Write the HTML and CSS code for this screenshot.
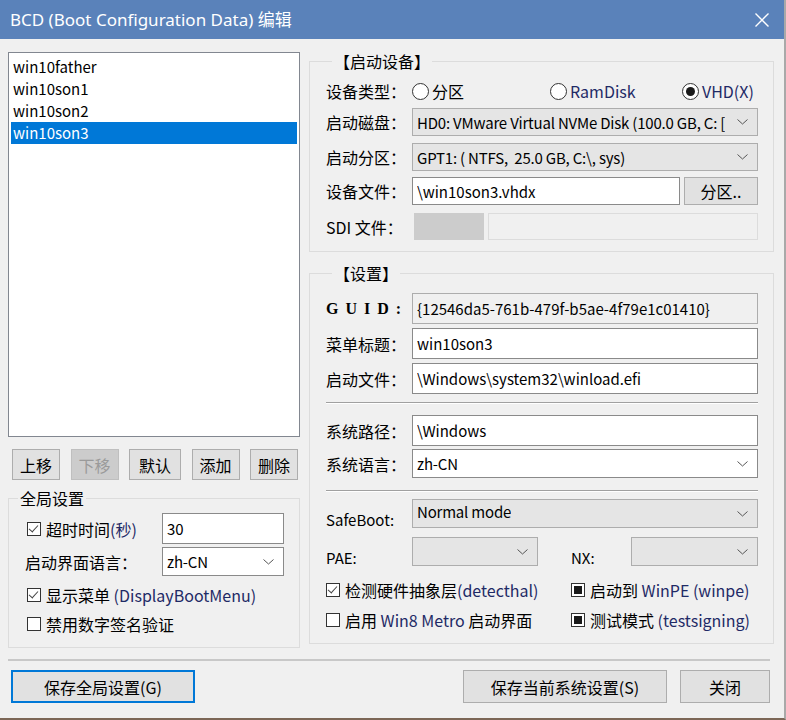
FILE: index.html
```html
<!DOCTYPE html>
<html lang="zh-CN">
<head>
    <meta charset="UTF-8">
    <title>BCD 编辑</title>
    <link rel="stylesheet" href="styles.css">
</head>
<body>
<div class="window">
    <div class="titlebar">
        <span class="title">BCD (Boot Configuration Data) 编辑</span>
        <svg class="close" width="16" height="16" viewBox="0 0 16 16"><path d="M1.5 1.5L14.5 14.5M14.5 1.5L1.5 14.5" stroke="#fff" stroke-width="1.4" fill="none"/></svg>
    </div>

    <div class="main">
        <div class="left">
            <ul class="list">
                <li>win10father</li>
                <li>win10son1</li>
                <li>win10son2</li>
                <li class="selected">win10son3</li>
            </ul>
            <div class="list-buttons">
                <button class="btn">上移</button>
                <button class="btn" disabled>下移</button>
                <button class="btn wide">默认</button>
                <button class="btn">添加</button>
                <button class="btn">删除</button>
            </div>
            <fieldset class="group global">
                <legend>全局设置</legend>
                <div class="grow first">
                    <label class="check"><span class="box checked"></span><span>超时时间<span class="latin">(秒)</span></span></label>
                    <input class="text" type="text" value="30">
                </div>
                <div class="grow combo-row">
                    <span class="glabel">启动界面语言：</span>
                    <div class="combo white"><span>zh-CN</span><svg width="11" height="6" viewBox="0 0 11 6"><path d="M0.5 0.5L5.5 5L10.5 0.5" stroke="#555" fill="none"/></svg></div>
                </div>
                <label class="check crow first-check"><span class="box checked"></span><span>显示菜单 <span class="latin">(DisplayBootMenu)</span></span></label>
                <label class="check crow"><span class="box"></span><span>禁用数字签名验证</span></label>
            </fieldset>
        </div>

        <div class="right">
            <fieldset class="group device">
                <legend>【启动设备】</legend>
                <div class="row radio-row">
                    <span class="label">设备类型：</span>
                    <div class="radios">
                        <label class="radio"><span class="dot"></span>分区</label>
                        <label class="radio"><span class="dot"></span><span class="latin">RamDisk</span></label>
                        <label class="radio"><span class="dot on"></span><span class="latin">VHD(X)</span></label>
                    </div>
                </div>
                <div class="row r1">
                    <span class="label">启动磁盘：</span>
                    <div class="combo"><span>HD0: VMware Virtual NVMe Disk (100.0 GB, C: [</span><svg width="11" height="6" viewBox="0 0 11 6"><path d="M0.5 0.5L5.5 5L10.5 0.5" stroke="#555" fill="none"/></svg></div>
                </div>
                <div class="row r2">
                    <span class="label">启动分区：</span>
                    <div class="combo"><span>GPT1: ( NTFS,&nbsp; 25.0 GB, C:\, sys)</span><svg width="11" height="6" viewBox="0 0 11 6"><path d="M0.5 0.5L5.5 5L10.5 0.5" stroke="#555" fill="none"/></svg></div>
                </div>
                <div class="row r3">
                    <span class="label">设备文件：</span>
                    <input class="text file" type="text" value="\win10son3.vhdx">
                    <button class="btn part">分区..</button>
                </div>
                <div class="row r4">
                    <span class="label">SDI 文件：</span>
                    <span class="sdi-box"></span>
                    <span class="sdi-field"></span>
                </div>
            </fieldset>

            <fieldset class="group settings">
                <legend>【设置】</legend>
                <div class="row tall first">
                    <span class="label guid">GUID:</span>
                    <input class="text readonly" type="text" value="{12546da5-761b-479f-b5ae-4f79e1c01410}" readonly>
                </div>
                <div class="row tall gap4">
                    <span class="label">菜单标题：</span>
                    <input class="text" type="text" value="win10son3">
                </div>
                <div class="row tall gap4">
                    <span class="label">启动文件：</span>
                    <input class="text" type="text" value="\Windows\system32\winload.efi">
                </div>
                <div class="sep s1"></div>
                <div class="row tall">
                    <span class="label">系统路径：</span>
                    <input class="text" type="text" value="\Windows">
                </div>
                <div class="row gap3">
                    <span class="label">系统语言：</span>
                    <div class="combo white"><span>zh-CN</span><svg width="11" height="6" viewBox="0 0 11 6"><path d="M0.5 0.5L5.5 5L10.5 0.5" stroke="#555" fill="none"/></svg></div>
                </div>
                <div class="sep s2"></div>
                <div class="row low safeboot">
                    <span class="label small">SafeBoot:</span>
                    <div class="combo top"><span>Normal mode</span><svg width="11" height="6" viewBox="0 0 11 6"><path d="M0.5 0.5L5.5 5L10.5 0.5" stroke="#555" fill="none"/></svg></div>
                </div>
                <div class="row low pae">
                    <span class="label small">PAE:</span>
                    <div class="combo short"><span></span><svg width="11" height="6" viewBox="0 0 11 6"><path d="M0.5 0.5L5.5 5L10.5 0.5" stroke="#555" fill="none"/></svg></div>
                    <span class="label small nx">NX:</span>
                    <div class="combo"><span></span><svg width="11" height="6" viewBox="0 0 11 6"><path d="M0.5 0.5L5.5 5L10.5 0.5" stroke="#555" fill="none"/></svg></div>
                </div>
                <div class="checks">
                    <label class="check"><span class="box checked"></span><span>检测硬件抽象层<span class="latin">(detecthal)</span></span></label>
                    <label class="check"><span class="box mixed"></span><span>启动到 <span class="latin">WinPE (winpe)</span></span></label>
                    <label class="check"><span class="box"></span><span>启用 <span class="latin">Win8 Metro</span> 启动界面</span></label>
                    <label class="check"><span class="box mixed"></span><span>测试模式 <span class="latin">(testsigning)</span></span></label>
                </div>
            </fieldset>
        </div>
    </div>

    <div class="footer">
        <button class="btn big default">保存全局设置(G)</button>
        <button class="btn big save">保存当前系统设置(S)</button>
        <button class="btn big closebtn">关闭</button>
    </div>
</div>
</body>
</html>
```

FILE: styles.css
```css
* {
    box-sizing: border-box;
}
body {
    margin: 0;
    background: #f0f0f0;
    font-family: "Noto Sans CJK SC", sans-serif;
    font-size: 16px;
    color: #000;
}
.window {
    width: 786px;
    height: 720px;
    border-right: 2px solid #a9a9a9;
    border-bottom: 2px solid #7c6656;
    overflow: hidden;
}
.titlebar {
    height: 39px;
    background: #5a82ba;
    display: flex;
    align-items: center;
    justify-content: space-between;
    padding: 0 14px 0 10px;
}
.title {
    color: #fff;
    font-family: "Noto Sans", "Noto Sans CJK SC", sans-serif;
    font-size: 17px;
    line-height: 20px;
}
.main {
    display: flex;
    padding: 12px 0 0 8px;
    gap: 9px;
}
.left {
    width: 292px;
}
.right {
    width: 465px;
}

/* list box */
.list {
    list-style: none;
    margin: 1px 0 0;
    padding: 3px 2px;
    height: 385px;
    background: #fff;
    border: 1px solid #828790;
}
.list li {
    height: 22px;
    line-height: 22px;
    padding-left: 2px;
    font-size: 15px;
}
.list li.selected {
    background: #0078d7;
    color: #fff;
}
.list-buttons {
    display: flex;
    justify-content: space-between;
    padding: 0 2px 0 4px;
    margin-top: 12px;
}

/* buttons */
.btn {
    font-family: inherit;
    font-size: 16px;
    height: 31px;
    width: 48px;
    padding: 0;
    background: #e1e1e1;
    border: 1px solid #adadad;
    color: #000;
}
.btn.wide {
    width: 52px;
}
.btn:disabled {
    background: #cccccc;
    border-color: #bfbfbf;
    color: #9a9a9a;
}

/* group boxes */
.group {
    margin: 0;
    padding: 0 15px 0 16px;
    border: 1px solid #dcdcdc;
    min-width: 0;
}
.group legend {
    padding: 0 2px;
    margin-left: 6px;
    line-height: 20px;
    height: 20px;
}
.global {
    margin-top: 8px;
    padding: 0 15px 8px 16px;
    height: 160px;
}
.global legend {
    margin-left: -7px;
}
.grow {
    display: flex;
    align-items: center;
    justify-content: space-between;
}
.grow.first {
    margin-top: 5px;
    padding-left: 2px;
}
.grow .text {
    flex: none;
    width: 122px;
    height: 31px;
}
.combo-row {
    margin-top: 3px;
    height: 29px;
}
.combo-row .combo {
    width: 122px;
    flex: none;
}
.glabel {
    line-height: 20px;
}
.crow {
    height: 26px;
    padding-left: 2px;
}
.first-check {
    margin-top: 6px;
}
.crow + .crow {
    margin-top: 3px;
}

/* check boxes and radios */
.check {
    display: flex;
    align-items: center;
    line-height: 20px;
    white-space: nowrap;
}
.box {
    width: 14px;
    height: 14px;
    border: 1px solid #333;
    background: #fff;
    margin-right: 5px;
    flex: none;
    position: relative;
}
.box.checked::after {
    content: "";
    position: absolute;
    left: 3px;
    top: 0px;
    width: 4px;
    height: 8px;
    border-right: 1.5px solid #444;
    border-bottom: 1.5px solid #444;
    transform: rotate(42deg);
}
.box.mixed::after {
    content: "";
    position: absolute;
    left: 2px;
    top: 2px;
    width: 8px;
    height: 8px;
    background: #1a1a1a;
}
.latin {
    color: #1f2a66;
}
.radios {
    display: grid;
    grid-template-columns: 138px 132px auto;
}
.radio {
    display: flex;
    align-items: center;
    line-height: 20px;
}
.dot {
    width: 17px;
    height: 17px;
    border: 1px solid #333;
    border-radius: 50%;
    background: #fff;
    margin-right: 3px;
    position: relative;
}
.dot.on::after {
    content: "";
    position: absolute;
    left: 3px;
    top: 3px;
    width: 9px;
    height: 9px;
    border-radius: 50%;
    background: #1a1a1a;
}

/* rows on the right */
.row {
    display: flex;
    align-items: center;
    height: 28px;
}
.label {
    width: 86px;
    flex: none;
    line-height: 20px;
    white-space: nowrap;
}
.label.guid {
    font-family: "Liberation Serif", serif;
    font-weight: bold;
    letter-spacing: 7px;
    font-size: 16px;
}
.label.small {
    font-size: 15px;
    font-family: "Noto Sans CJK SC", sans-serif;
}
.radio-row {
    height: 26px;
    margin-top: 7px;
}
.r1 {
    margin-top: 4px;
}
.r2 {
    margin-top: 7px;
}
.r3 {
    margin-top: 6px;
}
.r4 {
    margin-top: 8px;
    height: 27px;
    margin-bottom: 11px;
}
.text {
    flex: 1;
    min-width: 0;
    height: 100%;
    font-family: inherit;
    font-size: 15px;
    padding: 0 4px;
    background: #fff;
    border: 1px solid #8a8a8a;
    color: #000;
    outline: none;
}
.text.file {
    flex: none;
    width: 268px;
}
.text.readonly {
    background: #f0f0f0;
    border-color: #adadad;
}
.btn.part {
    width: 75px;
    height: 28px;
    margin-left: 4px;
}
.sdi-box {
    width: 70px;
    height: 27px;
    margin-left: 2px;
    background: #cccccc;
}
.sdi-field {
    flex: 1;
    height: 27px;
    margin-left: 4px;
    border: 1px solid #dcdcdc;
}
.combo {
    flex: 1;
    height: 100%;
    display: flex;
    align-items: center;
    justify-content: space-between;
    padding: 0 9px 0 4px;
    background: #e5e5e5;
    border: 1px solid #adadad;
    font-size: 15px;
    white-space: nowrap;
    overflow: hidden;
}
.combo span {
    overflow: hidden;
    letter-spacing: -0.2px;
}
.combo svg {
    flex: none;
    margin-left: 6px;
}
.combo.white {
    background: #fff;
    border-color: #8a8a8a;
}
.combo.short {
    flex: none;
    width: 126px;
}
.combo.top span {
    margin-top: -4px;
}
.settings {
    margin-top: 11px;
    padding-bottom: 11px;
}
.row.tall {
    height: 31px;
}
.row.first {
    margin-top: 10px;
}
.gap4 {
    margin-top: 4px;
}
.gap3 {
    margin-top: 3px;
    height: 29px;
}
.sep {
    border-top: 1px solid #a0a0a0;
    border-bottom: 1px solid #fff;
    height: 2px;
}
.s1 {
    margin: 8px 0 11px;
}
.s2 {
    margin: 12px 0 7px;
}
.row.low {
    align-items: flex-end;
    height: 29px;
}
.row.low .label {
    margin-bottom: -2px;
}
.row.low .combo {
    align-self: stretch;
    height: auto;
}
.pae {
    margin-top: 9px;
}
.label.nx {
    width: 60px;
    margin-left: 33px;
}
.checks {
    display: grid;
    grid-template-columns: 245px auto;
    row-gap: 6px;
    margin-top: 12px;
}
.checks .check {
    height: 24px;
}

/* footer */
.footer {
    margin: 11px 14px 0 8px;
    padding-top: 9px;
    border-top: 2px solid #c8c8c8;
    display: flex;
}
.btn.big {
    height: 33px;
}
.btn.default {
    width: 184px;
    margin-left: 3px;
    border: 2px solid #0078d7;
}
.btn.save {
    width: 204px;
    margin-left: 268px;
}
.btn.closebtn {
    width: 90px;
    margin-left: 13px;
}
```
